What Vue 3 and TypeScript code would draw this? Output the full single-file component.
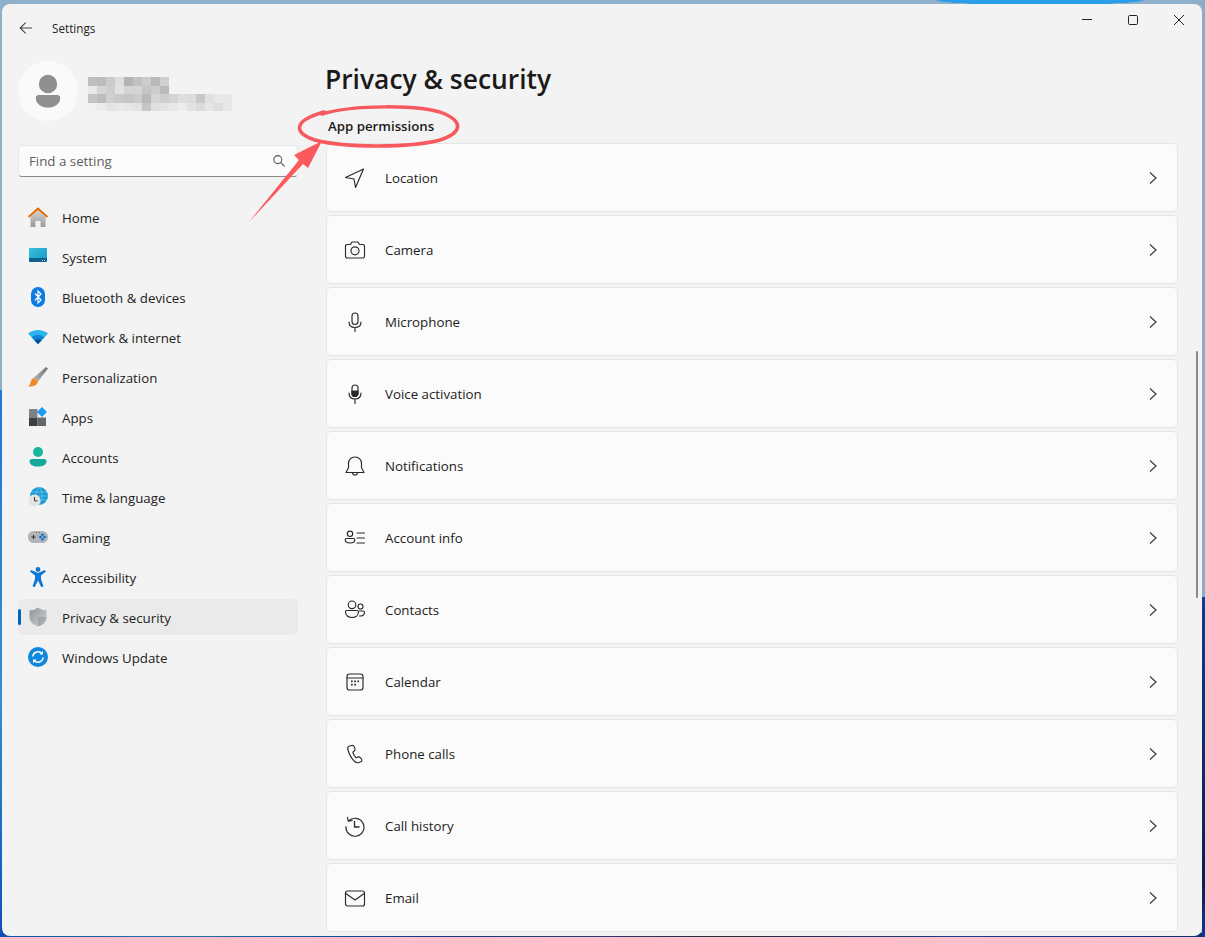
<script setup lang="ts">
type Row = { label: string; icon: string }
const rows: Row[] = [
  { label: 'Location', icon: 'location' },
  { label: 'Camera', icon: 'camera' },
  { label: 'Microphone', icon: 'mic' },
  { label: 'Voice activation', icon: 'voice' },
  { label: 'Notifications', icon: 'bell' },
  { label: 'Account info', icon: 'account' },
  { label: 'Contacts', icon: 'contacts' },
  { label: 'Calendar', icon: 'calendar' },
  { label: 'Phone calls', icon: 'phone' },
  { label: 'Call history', icon: 'history' },
  { label: 'Email', icon: 'email' },
]
const nav = [
  { label: 'Home', icon: 'home' },
  { label: 'System', icon: 'system' },
  { label: 'Bluetooth & devices', icon: 'bt' },
  { label: 'Network & internet', icon: 'wifi' },
  { label: 'Personalization', icon: 'brush' },
  { label: 'Apps', icon: 'apps' },
  { label: 'Accounts', icon: 'accounts' },
  { label: 'Time & language', icon: 'time' },
  { label: 'Gaming', icon: 'gaming' },
  { label: 'Accessibility', icon: 'access' },
  { label: 'Privacy & security', icon: 'privacy' },
  { label: 'Windows Update', icon: 'update' },
]
// Mosaic that hides the account name: grey level of each block, row by row.
const mosaic: number[][] = [
  [190, 188, 204, 222, 180, 194, 204, 184, 208],
  [232, 212, 206, 226, 212, 212, 198, 204, 186],
  [196, 188, 208, 202, 198, 204, 186, 212, 206, 212, 222, 220, 200, 224, 232, 232],
  [240, 236, 228, 232, 230, 226, 198, 224, 228, 232, 236, 226, 218, 230, 222, 232],
]
const cellColor = (v: number) => `rgb(${v},${v},${v})`
</script>

<template>
  <div class="desk">
    <svg class="defs" width="0" height="0">
      <defs>
        <linearGradient id="g-home" x1="0" y1="0" x2="0" y2="1"><stop offset="0" stop-color="#d4d4d4" /><stop offset="1" stop-color="#9c9c9c" /></linearGradient>
        <linearGradient id="g-sys" x1="0" y1="0" x2="1" y2="1"><stop offset="0" stop-color="#35c3dc" /><stop offset="1" stop-color="#1a94c4" /></linearGradient>
        <linearGradient id="g-handle" x1="1" y1="0" x2="0" y2="1"><stop offset="0" stop-color="#6f7378" /><stop offset="1" stop-color="#b4b7ba" /></linearGradient>
        <linearGradient id="g-shield" x1="0" y1="0" x2="1" y2="1"><stop offset="0" stop-color="#8e9297" /><stop offset="1" stop-color="#d2d4d6" /></linearGradient>
      </defs>
    </svg>
    <div class="win">
      <aside class="side">
        <div class="title">
          <svg class="back" width="16" height="16" viewBox="0 0 16 16" fill="none" stroke="#444" stroke-width="1.1"><path d="M14 8H2.6M7.6 2.6 2.2 8l5.4 5.4" /></svg>
          <span>Settings</span>
        </div>
        <div class="user">
          <div class="avatar">
            <svg width="44" height="44" viewBox="0 0 44 44" fill="#8f8f8f"><circle cx="22" cy="15" r="9.2" /><path d="M12.5 26h19c1.6 0 2.7 1.1 2.7 2.7C34.2 35 28.8 38.5 22 38.5S9.8 35 9.8 28.7c0-1.6 1.1-2.7 2.7-2.7z" /></svg>
          </div>
          <div class="mosaic">
            <div v-for="(r, i) in mosaic" :key="i" class="mrow">
              <i v-for="(v, j) in r" :key="j" :style="{ background: cellColor(v) }"></i>
            </div>
          </div>
        </div>
        <div class="search">
          <span>Find a setting</span>
          <svg width="14" height="14" viewBox="0 0 14 14" fill="none" stroke="#555" stroke-width="1.1"><circle cx="5.8" cy="5.6" r="4" /><path d="m8.800 8.600 3.800 3.800" /></svg>
        </div>
        <nav class="nav">
          <div v-for="n in nav" :key="n.label" class="item" :class="{ on: n.icon === 'privacy' }">
            <svg class="nicon" width="20" height="20" viewBox="0 0 20 20">
              <template v-if="n.icon === 'home'">
                <path d="M2.500 9.500 10 3l7.500 6.500V20h-5v-6h-5v6h-5z" fill="url(#g-home)" />
                <path d="M0 9.300 10 .3l10 9-1 1.400L10 3 1 10.700z" fill="#e06c00" />
              </template>
              <template v-else-if="n.icon === 'system'">
                <rect x="1" y="1" width="18" height="13" rx="1" fill="url(#g-sys)" />
                <path d="M1 11h18v3a1 1 0 0 1-1 1H2a1 1 0 0 1-1-1z" fill="#0f5f8f" />
                <path d="M14 13h1v1h-1zM16 13h1v1h-1z" fill="#bfe6f2" />
              </template>
              <template v-else-if="n.icon === 'bt'">
                <rect x="3" y="0" width="14" height="20" rx="7" fill="#0b7be5" />
                <path d="M7 6.500 13 13l-3 3V4l3 3-6 6.500" fill="none" stroke="#fff" stroke-width="1.200" />
              </template>
              <template v-else-if="n.icon === 'wifi'">
                <path d="M0 6.500C5.500 1.800 14.500 1.800 20 6.500L10 17z" fill="#2bb5ee" />
                <path d="M3.500 10.200c3.700-3 9.300-3 13 0L10 17z" fill="#0f84d6" />
                <path d="M6.500 13.400c2-1.500 5-1.500 7 0L10 17z" fill="#0a4f94" />
              </template>
              <template v-else-if="n.icon === 'brush'">
                <path d="M18 0 20 1.500 10 14.500 5.500 11z" fill="url(#g-handle)" />
                <path d="M5.500 11l4.500 3.500c-.5 3.500-4.500 5.500-10 5 2.500-1.500 2-3 3-5.500 .6-1.700 1.200-2.500 2.500-3z" fill="#f08a24" />
              </template>
              <template v-else-if="n.icon === 'apps'">
                <rect x="1" y="2" width="8.500" height="8.500" fill="#7d8288" />
                <rect x="1" y="10.500" width="8.500" height="8.500" fill="#3d4043" />
                <rect x="9.500" y="10.500" width="8.500" height="8.500" fill="#63676b" />
                <path d="m14 0 5 5-5 5-5-5z" fill="#1c9bf0" />
              </template>
              <template v-else-if="n.icon === 'accounts'">
                <circle cx="10" cy="5" r="5" fill="#17b79e" />
                <path d="M4 12h12c1.700 0 2.500 1 2.500 2.200 0 3.300-3.500 5.300-8.500 5.300s-8.500-2-8.500-5.300C1.500 13 2.300 12 4 12z" fill="#17a899" />
              </template>
              <template v-else-if="n.icon === 'time'">
                <circle cx="11" cy="9" r="9" fill="#1c9ad6" />
                <path d="M11 0c-2 2.500-3 5.500-3 9s1 6.500 3 9M2 9h18M3 5h16M3 13h16M11 0c2 2.500 3 5.500 3 9s-1 6.500-3 9" fill="none" stroke="#7fd4ee" stroke-width=".6" />
                <circle cx="6.500" cy="13.500" r="6" fill="#e4e4e4" />
                <path d="M6.500 10v3.800h3" fill="none" stroke="#333" stroke-width="1" />
              </template>
              <template v-else-if="n.icon === 'gaming'">
                <rect x="0" y="4" width="20" height="12" rx="5.500" fill="#b2b5b9" />
                <path d="M3.500 10h4M5.500 8v4" stroke="#333" stroke-width="1" />
                <circle cx="14.500" cy="7.800" r="1.300" fill="#0a6fc4" /><circle cx="12.500" cy="10" r="1.300" fill="#0a6fc4" /><circle cx="16.500" cy="10" r="1.300" fill="#0a6fc4" /><circle cx="14.500" cy="12.200" r="1.300" fill="#0a6fc4" />
                <path d="M8 5.500h1M11 5.500h1" stroke="#555" stroke-width=".8" />
              </template>
              <template v-else-if="n.icon === 'access'">
                <circle cx="10" cy="2.500" r="2.400" fill="#0f78d4" />
                <path d="M2 4.500 3.200 3 10 6l6.800-3L18 4.500 13 8.500v3.500l2.500 7.500-2.300.5L10 13.500 6.800 20l-2.300-.5L7 12V8.500z" fill="#0f78d4" />
              </template>
              <template v-else-if="n.icon === 'privacy'">
                <path d="M10 .5c2.500 2 5.500 2.800 8.500 2.800v6.700c0 4.500-3.500 8-8.500 9.500-5-1.500-8.500-5-8.500-9.500V3.300C4.500 3.300 7.500 2.500 10 .5z" fill="url(#g-shield)" />
                <path d="M10 10h8.500c0 4.500-3.500 8-8.500 9.500z" fill="#8e9297" opacity=".55" />
              </template>
              <template v-else>
                <circle cx="10" cy="10" r="10" fill="#0f87dc" />
                <path d="M4.800 9.500A5.300 5.300 0 0 1 14 6.500M15.200 10.500A5.300 5.300 0 0 1 6 13.500" fill="none" stroke="#fff" stroke-width="1.400" />
                <path d="M15 3.800V7.500h-3.700zM5 16.200V12.500h3.700z" fill="#fff" />
              </template>
            </svg>
            <span class="nlabel">{{ n.label }}</span>
          </div>
        </nav>
      </aside>

      <main class="main">
        <div class="controls">
          <svg width="12" height="12" viewBox="0 0 12 12" fill="none" stroke="#222" stroke-width="1"><path d="M1 5.500h10" /></svg>
          <svg width="12" height="12" viewBox="0 0 12 12" fill="none" stroke="#222" stroke-width="1"><rect x="1.500" y="1.500" width="9" height="9" rx="1.200" /></svg>
          <svg width="12" height="12" viewBox="0 0 12 12" fill="none" stroke="#222" stroke-width="1"><path d="m1 1 10 10M11 1 1 11" /></svg>
        </div>
        <h1>Privacy &amp; security</h1>
        <h2>App permissions</h2>
        <div class="list">
          <div v-for="r in rows" :key="r.label" class="row">
            <svg class="ricon" width="22" height="22" viewBox="0 0 22 22" fill="none" stroke="#2a2a2a" stroke-width="1.150" stroke-linejoin="round" stroke-linecap="round">
              <template v-if="r.icon === 'location'">
                <path d="M19.500 2 1.500 10.500l8.500 1.500 1.500 8.500z" />
              </template>
              <template v-else-if="r.icon === 'camera'">
                <path d="M3.200 5.500h3.300L8 3h6l1.500 2.500h3.300A1.700 1.700 0 0 1 20.500 7.200v10.100A1.700 1.700 0 0 1 18.800 19H3.200a1.700 1.700 0 0 1-1.700-1.700V7.200A1.700 1.700 0 0 1 3.200 5.500z" />
                <circle cx="11" cy="11.800" r="4" />
              </template>
              <template v-else-if="r.icon === 'mic'">
                <rect x="8" y="2" width="6" height="11.500" rx="3" />
                <path d="M5 11c0 3.800 2.500 5.500 6 5.500s6-1.700 6-5.500M11 16.500v4" />
              </template>
              <template v-else-if="r.icon === 'voice'">
                <path d="M11 2a3 3 0 0 1 3 3v5.500a3 3 0 0 1-6 0V5a3 3 0 0 1 3-3z" />
                <path d="M8 8h6v2.500a3 3 0 0 1-6 0z" fill="#2a2a2a" />
                <path d="M5 10c0 3.800 2.500 6 6 6s6-2.200 6-6M11 16v4.500" />
              </template>
              <template v-else-if="r.icon === 'bell'">
                <path d="M11 2c-4 0-6.500 3-6.500 6.500v4.200L2 17.500h18l-2.500-4.800V8.500C17.500 5 15 2 11 2z" />
                <path d="M8.500 17.500a2.500 2.500 0 0 0 5 0" />
              </template>
              <template v-else-if="r.icon === 'account'">
                <circle cx="6" cy="6.800" r="2.700" />
                <path d="M2.500 11.500h7a1.300 1.300 0 0 1 1.300 1.300c0 2-2.200 3.200-4.800 3.200s-4.800-1.200-4.800-3.200a1.300 1.300 0 0 1 1.300-1.300zM13 6h7.500M13 11h7.500M13 16h7.500" />
              </template>
              <template v-else-if="r.icon === 'contacts'">
                <circle cx="8" cy="5.800" r="3.800" />
                <circle cx="16.500" cy="7.500" r="2.500" />
                <path d="M3 11.500h10a1.500 1.500 0 0 1 1.500 1.500c0 3.300-2.800 5.500-6.500 5.500S1.500 16.300 1.500 13A1.500 1.500 0 0 1 3 11.500zM15.500 12h3.500a1.500 1.500 0 0 1 1.500 1.500c0 2.400-2 3.700-5 3.500" />
              </template>
              <template v-else-if="r.icon === 'calendar'">
                <rect x="3" y="3" width="16" height="16" rx="2.500" />
                <path d="M3 7h16" />
                <g fill="#2a2a2a" stroke="none"><rect x="7" y="9.500" width="1.700" height="1.700" /><rect x="10.200" y="9.500" width="1.700" height="1.700" /><rect x="13.400" y="9.500" width="1.700" height="1.700" /><rect x="7" y="12.800" width="1.700" height="1.700" /><rect x="10.200" y="12.800" width="1.700" height="1.700" /></g>
              </template>
              <template v-else-if="r.icon === 'phone'">
                <path d="M7.500 2.500 5 3.300C3.800 3.800 3.500 5.200 4 7c1.200 4.300 3.500 8.500 6.500 11.300 1.500 1.300 3 1.700 4.300 1.200l2-.8c1.200-.5 1.400-1.700.7-2.700l-1-1.200c-.7-.9-1.700-1.100-2.700-.7l-1.800.6c-1.500-1.300-2.800-3.500-3.200-5.500l1.500-1.200c.8-.7 1-1.700.6-2.600l-.7-1.700c-.4-.9-1.200-1.500-2.700-1.200z" />
              </template>
              <template v-else-if="r.icon === 'history'">
                <path d="M4.500 6A9 9 0 1 1 2 11.500M3.500 2.300 4.300 6.300 8.300 5.500" />
                <path d="M10.500 6.500v5.500h4.500" stroke-width="1.300" />
              </template>
              <template v-else>
                <rect x="1.500" y="4" width="19" height="15" rx="2" />
                <path d="m1.800 6.500 9.200 6.500 9.200-6.500" />
              </template>
            </svg>
            <span class="rlabel">{{ r.label }}</span>
            <svg class="chev" width="10" height="14" viewBox="0 0 10 14" fill="none" stroke="#3a3a3a" stroke-width="1.200"><path d="m2 1.500 6 5.500-6 5.500" /></svg>
          </div>
        </div>
        <div class="scroll"></div>
      </main>

      <svg class="mark" width="1205" height="937" viewBox="0 0 1205 937" fill="none">
        <path d="M322 114C352 105 420 104 445 114 463 122 462 133 440 140 410 148 345 148 315 140 294 133 292 121 324 112" stroke="#f75a5e" stroke-width="3.500" stroke-linecap="round" />
        <path d="M249 222 299 160 294 155 322 141 308 168 303 164z" fill="#fb5a5c" />
      </svg>
    </div>
  </div>
</template>

<style>
html, body { margin: 0; height: 100%; overflow: hidden; }
</style>

<style scoped>
.defs { position: absolute; }
.desk {
  width: 1205px;
  height: 937px;
  box-sizing: border-box;
  padding: 4px 3px 1px 2px;
  background:
    radial-gradient(ellipse 105px 5px at 1040px 0, #2a9fe8 97%, transparent 100%),
    linear-gradient(180deg, #8fb0c9 0 390px, #1f78d2 390px, #2f90d0 700px, #0f50b8 100%) left top / 3px 100% no-repeat,
    linear-gradient(180deg, #8aacc6 0 597px, #0b3d94 597px, #0a1f50 880px, #0b3a90 100%) right top / 3px 100% no-repeat,
    linear-gradient(90deg, #1a4fa8, #1f6fa8 15%, #163a88 35%, #2a3a70 50%, #2a2a38 60%, #1a3c90 80%, #0a2f75) left bottom / 100% 4px no-repeat,
    #8fb0c9;
  font-family: "Open Sans", "Noto Sans", sans-serif;
  color: #1c1c1c;
}
.win {
  position: relative;
  display: flex;
  height: 932px;
  background: #f3f3f3;
  border-radius: 8px;
  overflow: hidden;
}
.side {
  width: 296px;
  flex: none;
  padding: 0 0 0 16px;
  box-sizing: border-box;
}
.title {
  display: flex;
  align-items: center;
  height: 48px;
  font-size: 11.700px;
}
.back { margin-right: 18px; }
.title span { color: #222; }
.user {
  display: flex;
  align-items: center;
  gap: 10px;
  margin-top: 9px;
  height: 60px;
}
.avatar {
  width: 60px;
  height: 60px;
  border-radius: 50%;
  background: #fafafa;
  display: flex;
  align-items: center;
  justify-content: center;
}
.mosaic { display: flex; flex-direction: column; margin-top: 6px; }
.mrow { display: flex; height: 8.500px; }
.mrow i { display: block; width: 9px; }
.search {
  margin-top: 24px;
  width: 280px;
  height: 32px;
  box-sizing: border-box;
  padding: 0 11px 0 10px;
  display: flex;
  align-items: center;
  justify-content: space-between;
  background: #fbfbfb;
  border: 1px solid #e6e6e6;
  border-bottom-color: #8a8a8a;
  border-radius: 4px;
  font-size: 13.300px;
  color: #5f5f5f;
}
.nav { margin-top: 22px; display: flex; flex-direction: column; gap: 4px; }
.item {
  position: relative;
  width: 280px;
  height: 36px;
  display: flex;
  align-items: center;
  border-radius: 5px;
  font-size: 13.300px;
  color: #222;
}
.nlabel { padding-top: 2px; }
.item.on { background: #eaeaea; }
.item.on::before {
  content: "";
  position: absolute;
  left: 0;
  top: 10px;
  width: 3px;
  height: 16px;
  border-radius: 2px;
  background: #0067c0;
}
.nicon { margin-left: 10px; margin-right: 14px; flex: none; }
.main {
  position: relative;
  flex: 1;
  min-width: 0;
  padding-left: 28px;
}
.controls {
  position: absolute;
  top: 10px;
  right: 17px;
  display: flex;
  gap: 34px;
}
h1 {
  margin: 0 0 0 -1px;
  padding-top: 53px;
  font-size: 26.400px;
  line-height: 44px;
  font-weight: 600;
  color: #1a1a1a;
  height: 44px;
}
h2 {
  margin: 15px 0 0 2px;
  font-size: 13.250px;
  line-height: 20px;
  font-weight: 600;
  color: #1a1a1a;
}
.list { margin-top: 7px; width: 852px; display: flex; flex-direction: column; gap: 3px; }
.row {
  height: 69px;
  flex: none;
  box-sizing: border-box;
  display: flex;
  align-items: center;
  background: #fbfbfb;
  border: 1px solid #e6e6e6;
  border-radius: 5px;
  padding: 0 19px 0 17px;
  font-size: 13.300px;
  color: #222;
}
.ricon { flex: none; margin-right: 19px; }
.rlabel { flex: 1; }
.scroll {
  position: absolute;
  right: 4px;
  top: 347px;
  width: 2px;
  height: 247px;
  border-radius: 1px;
  background: #8b8b8b;
}
.mark { position: absolute; left: -2px; top: -4px; pointer-events: none; }
</style>
